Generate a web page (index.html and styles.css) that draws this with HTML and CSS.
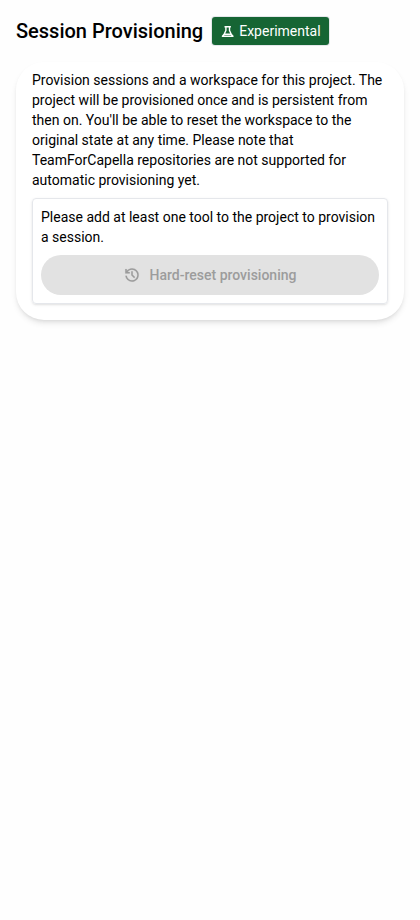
FILE: index.html
```html
<!DOCTYPE html>
<html lang="en">
<head>
<meta charset="utf-8">
<title>Session Provisioning</title>
<link rel="stylesheet" href="styles.css">
</head>
<body>
<main class="page">
  <header class="header">
    <h2 class="title">Session Provisioning</h2>
    <span class="badge">
      <svg class="badge-icon" viewBox="0 0 15 15"><path d="M4.500 2.700H10.900M5.900 2.700V6.500L4 10.500 2.400 12.300H13L11.400 10.500 9.500 6.500V2.700M4.200 10.300H11.200"/></svg>
      <span>Experimental</span>
    </span>
  </header>
  <section class="card">
    <p class="text">Provision sessions and a workspace for this project. The project will be provisioned once and is persistent from then on. You'll be able to reset the workspace to the original state at any time. Please note that TeamForCapella repositories are not supported for automatic provisioning yet.</p>
    <div class="panel">
      <p class="text">Please add at least one tool to the project to provision a session.</p>
      <button class="reset" disabled>
        <svg class="reset-icon" viewBox="0 -960 960 960"><path d="M480-120q-138 0-240.500-91.500T122-440h82q14 104 92.500 172T480-200q117 0 198.500-81.500T760-480q0-117-81.500-198.500T480-760q-69 0-129 32t-101 88h110v80H120v-240h80v94q51-64 124.500-99T480-840q75 0 140.500 28.500t114 77q48.500 48.500 77 114T840-480q0 75-28.500 140.500t-77 114q-48.500 48.500-114 77T480-120Zm112-192L440-464v-216h80v184l128 128-56 56Z"/></svg>
        <span>Hard-reset provisioning</span>
      </button>
    </div>
  </section>
</main>
</body>
</html>
```
FILE: styles.css
```css
* { box-sizing: border-box; }
body { margin: 0; background: #fefefe; color: #000; font: 14px/20px Roboto, sans-serif; }
.page { padding: 16px; }
.header { display: flex; align-items: center; gap: 8.500px; height: 30px; margin-bottom: 16px; }
.title { margin: 0; font-size: 20px; line-height: 28px; font-weight: 500; }
.badge { display: flex; align-items: center; gap: 4px; height: 28px; padding: 0 8.500px; border-radius: 3px; background: #166534; box-shadow: 0 0 0 1px #e5e7eb; color: #fff; }
.badge-icon { width: 15px; height: 15px; fill: none; stroke: currentColor; stroke-width: 1.400; stroke-linejoin: round; }
.card { padding: 8px 16px 16px; border-radius: 28px; background: #fff; box-shadow: 0 4px 6px -1px rgba(0,0,0,.1), 0 2px 4px -2px rgba(0,0,0,.1); }
.text { margin: 0; }
.panel { margin-top: 8px; padding: 8px; border: 1px solid #e5e7eb; border-radius: 4px; box-shadow: 0 1px 3px rgba(0,0,0,.1), 0 1px 2px -1px rgba(0,0,0,.1); }
.reset { display: flex; align-items: center; justify-content: center; gap: 8px; width: 100%; height: 40px; margin-top: 8px; padding: 0; border: 0; border-radius: 20px; background: #e2e2e2; color: #9c9c9c; font: 500 14px/20px Roboto, sans-serif; }
.reset-icon { width: 18px; height: 18px; margin: 0 .3px 0 -.3px; fill: currentColor; stroke: currentColor; stroke-width: 6; }
```
